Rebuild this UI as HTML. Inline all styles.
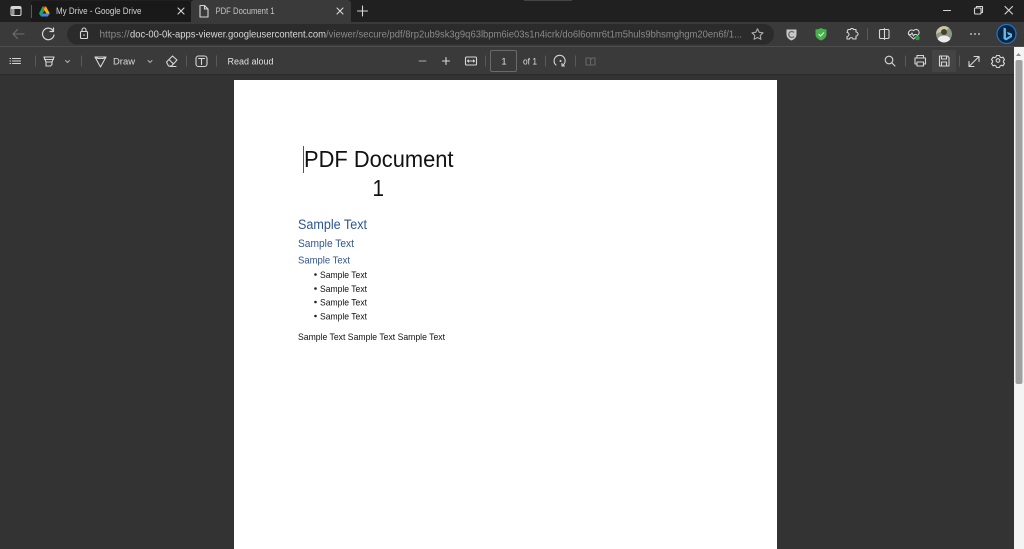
<!DOCTYPE html>
<html><head><meta charset="utf-8"><title>PDF Document 1</title>
<style>
html,body{margin:0;padding:0;width:1024px;height:549px;overflow:hidden;background:#333}
svg{display:block;filter:blur(.35px)}
text{font-family:"Liberation Sans",sans-serif}
.i{fill:none;stroke:#d6d6d6;stroke-width:1.1;stroke-linecap:round;stroke-linejoin:round}
.s{stroke:#5a5a5a;stroke-width:1}
</style></head><body>
<svg width="1024" height="549" viewBox="0 0 1024 549" xmlns="http://www.w3.org/2000/svg">
<rect width="1024" height="549" fill="#333"/>
<!-- tab strip -->
<rect width="1024" height="22" fill="#202020"/>
<rect x="524" y="0" width="48" height="1" fill="#444"/>
<path d="M31 22V5q0-4 4-4H187q4 0 4 4V22z" fill="#191919"/>
<path d="M191 22V4q0-4 4-4H347q4 0 4 4V22z" fill="#3a3a3a"/>
<rect y="22" width="1024" height="25" fill="#3a3a3a"/>
<rect y="46" width="1024" height="1" fill="#4e4e4e"/>
<rect y="47" width="1024" height="27" fill="#3a3a3a"/>
<rect y="74" width="1024" height="1" fill="#2b2b2b"/>
<!-- tab actions -->
<rect class="i" x="11" y="6.500" width="10" height="9" rx="1.500"/>
<rect x="11" y="6.500" width="10" height="2.500" fill="#d6d6d6"/>
<rect x="12" y="9" width="2.500" height="6" fill="#999"/>
<path class="s" d="M31.500 5V18"/>
<!-- drive -->
<path d="M42.500 6.500L39 13.500l2 3 4-7z" fill="#1fa463"/>
<path d="M42.500 6.500h3.500l1 1.800-2.300 3.200z" fill="#db4437"/>
<path d="M46 6.500l3.800 7h-3.500l-2.500-4.500z" fill="#f4b400"/>
<path d="M41 16.500h6.800l2-3h-7z" fill="#4285f4"/>
<text x="56" y="14" font-size="9" fill="#d2d2d2" textLength="85.500" lengthAdjust="spacingAndGlyphs">My Drive - Google Drive</text>
<path class="i" d="M178 8l6 6M184 8l-6 6"/>
<path class="i" d="M200 5.500h4.500l3.500 3.500v8h-8zM204.500 5.500v3.500h3.500" stroke="#e6e6e6"/>
<text x="215.500" y="14" font-size="9" fill="#c4c4c4" textLength="59" lengthAdjust="spacingAndGlyphs">PDF Document 1</text>
<path class="i" d="M337 8l6 6M343 8l-6 6"/>
<path class="i" d="M362.500 6v10M357.500 11h10" stroke="#eee"/>
<!-- window controls -->
<path class="i" d="M943.500 10.500h7"/>
<rect class="i" x="974.500" y="8" width="6.500" height="6" rx="1"/>
<path class="i" d="M976.500 8v-1.500h6v6h-1.500"/>
<path class="i" d="M1005 6.500l7.500 7.500M1012.500 6.500l-7.500 7.500"/>
<!-- nav -->
<path class="i" d="M13 34h11M17.500 29.500L13 34l4.500 4.500" style="stroke:#6e6e6e"/>
<path class="i" d="M53 30.500a5.800 5.800 0 1 0 1 4.500M53.500 28v3.500h-3.500" style="stroke-width:1.200"/>
<!-- url bar -->
<rect x="67" y="24" width="707" height="20.500" rx="10.200" fill="#2b2b2b"/>
<rect class="i" x="80.500" y="31.500" width="7" height="7" rx="1"/>
<path class="i" d="M82 31.500v-1.500a2 2 0 0 1 4 0v1.500"/>
<circle cx="84" cy="35" r=".8" fill="#d6d6d6"/>
<text x="99.500" y="37.500" font-size="10.200" fill="#8a8a8a" textLength="30" lengthAdjust="spacingAndGlyphs">https://</text>
<text x="130" y="37.500" font-size="10.200" fill="#d8d8d8" textLength="196" lengthAdjust="spacingAndGlyphs">doc-00-0k-apps-viewer.googleusercontent.com</text>
<text x="326" y="37.500" font-size="10.200" fill="#8a8a8a" textLength="416" lengthAdjust="spacingAndGlyphs">/viewer/secure/pdf/8rp2ub9sk3g9q63lbpm6ie03s1n4icrk/do6l6omr6t1m5huls9bhsmghgm20en6f/1...</text>
<path class="i" d="M757.500 28.800l1.700 3.500 3.800.5-2.800 2.700.7 3.800-3.400-1.800-3.400 1.800.7-3.800-2.800-2.700 3.800-.5z" style="stroke:#aaa"/>
<!-- extensions -->
<path d="M786.500 29.500h10v5q0 4-5 6-5-2-5-6z" fill="#c9c9c9"/>
<path d="M794 32.500a3 3 0 1 0 0 4" fill="none" stroke="#6a6a6a" stroke-width="1.300"/>
<path d="M815.500 29.500q3 0 5.500-1.500 2.500 1.500 5.500 1.500v5q0 4-5.500 6-5.500-2-5.500-6z" fill="#46b04a"/>
<path d="M818.500 34l2 2 3.500-3.500" fill="none" stroke="#d8f0d8" stroke-width="1.200"/>
<path class="i" d="M848 29.500h2.500a1.600 1.600 0 0 1 3 0h2.500v2.500a2 2 0 0 1 0 4v3h-3a1.800 1.800 0 0 0-3.500 0h-2.500v-2.500a2 2 0 0 0 0-4z"/>
<path class="s" d="M867.500 28V40"/>
<rect class="i" x="879.500" y="29.500" width="9.500" height="9" rx="1.200"/>
<path class="i" d="M884.500 28.500v11"/>
<path class="i" d="M909 31.500a3 3 0 0 1 4.500-.8 3 3 0 0 1 5 3.800l-5 4.500-4.800-4.500a3 3 0 0 1 .3-3zM908.500 34.500h2.500l1-1.500 1.500 3 1-1.500h2"/>
<circle cx="917.500" cy="38" r="2.300" fill="#2d9a3f"/>
<circle cx="944" cy="34" r="8" fill="#8b9a80"/>
<path d="M936 34a8 8 0 0 1 13-6l-4 4-5 0z" fill="#c9c7a6"/>
<circle cx="944" cy="32" r="3" fill="#4c3d33"/>
<path d="M937.500 39a7.800 7.800 0 0 0 13 0q-2-3.500-6.500-3.500t-6.500 3.500z" fill="#ececec"/>
<circle cx="971" cy="34" r=".9" fill="#ddd"/><circle cx="975" cy="34" r=".9" fill="#ddd"/><circle cx="979" cy="34" r=".9" fill="#ddd"/>
<circle cx="1006.500" cy="34" r="9.500" fill="#0d2440" stroke="#1f73c4" stroke-width="1.300"/>
<path d="M1003.500 27.500l2.500 1v9.500l4.500-2.500-2.500-1-1-2.800 5 2v3.300l-6 3.500-2.500-1.500z" fill="#5fb8f0"/>
<!-- pdf toolbar left -->
<path class="i" d="M12.500 58.500h8M12.500 61h8M12.500 63.500h8M10 58.500h.6M10 61h.6M10 63.500h.6"/>
<path class="s" d="M35.500 55.500V66.500M81.500 55.500V66.500M186.500 55.500V66.500M216.500 55.500V66.500"/>
<path class="i" d="M44 57h10l-2 5h-6zM46 62v4h4.500l1.500-1.500V62M44.500 59.500h9"/>
<path class="i" d="M65.500 60.500l2 2 2-2" style="stroke:#aaa"/>
<path class="i" d="M95 57h11l-5.500 10zM95 57l3 1.500h5l3-1.500"/>
<text x="113" y="64.500" font-size="9.600" fill="#dcdcdc" textLength="22" lengthAdjust="spacingAndGlyphs">Draw</text>
<path class="i" d="M148 60.500l2 2 2-2" style="stroke:#aaa"/>
<path class="i" d="M166.500 62l6-6 4.500 4-5.500 6h-3zM169 59.500l4.500 4.500M170 66.500h6"/>
<rect class="i" x="196" y="56" width="11" height="10.500" rx="2.500"/>
<path class="i" d="M198.500 58.500h6M201.500 58.500v6"/>
<text x="227.500" y="64.500" font-size="9.600" fill="#e0e0e0" textLength="46" lengthAdjust="spacingAndGlyphs">Read aloud</text>
<!-- center -->
<path class="i" d="M419 61h7" style="stroke:#aaa"/>
<path class="i" d="M442.500 61h7M446 57.500v7"/>
<rect class="i" x="465.500" y="57" width="11" height="8" rx="1"/>
<path class="i" d="M467.500 61h7M468.500 60l-1 1 1 1M473.500 60l1 1-1 1"/>
<path class="s" d="M485.500 55.500V66.500M545.500 55.500V66.500M575.500 55.500V66.500"/>
<rect x="490.500" y="50.500" width="26" height="21" rx="1.500" fill="none" stroke="#6a6a6a"/>
<text x="501.500" y="64.500" font-size="9" fill="#e0e0e0">1</text>
<text x="523" y="64.500" font-size="9.400" fill="#dcdcdc" textLength="14" lengthAdjust="spacingAndGlyphs">of 1</text>
<path class="i" d="M556 65a5.500 5.500 0 1 1 6.500.5M562 63.500v2.500h2.500"/>
<circle cx="560.500" cy="61" r="1" fill="#d6d6d6"/>
<path class="i" d="M586 58h4.500l1 1 1-1H595v7h-9zM590.500 58.500v6.500" style="stroke:#666"/>
<!-- right -->
<circle class="i" cx="889" cy="60" r="3.800"/>
<path class="i" d="M892 63l3 3"/>
<path class="s" d="M905.500 55.500V66.500M959.500 55.500V66.500"/>
<path class="i" d="M917 58v-2.500h6.500V58M916.500 64h-1.500v-6h10.500v6h-1.500M917 62h6.500v4h-6.500z"/>
<rect x="932" y="50" width="24" height="22" fill="#444"/>
<path class="i" d="M939.500 56h8l1.500 1.500v8.500h-9.500zM941.500 56v3h5v-3M941.500 66v-4h5v4"/>
<path class="i" d="M969.500 66l9-9M974 56.500h5v5M969 61.500v5h5"/>
<circle class="i" cx="998" cy="60.500" r="1.800"/>
<path class="i" d="M996.500 55.500h3l.5 1.500 1.500.7 1.500-.5 1.500 2.500-1.100 1.100v1.400l1.100 1.100-1.500 2.500-1.500-.5-1.500.7-.5 1.500h-3l-.5-1.500-1.500-.7-1.500.5-1.500-2.500 1.100-1.100v-1.400l-1.100-1.100 1.500-2.500 1.500.5 1.500-.7z"/>
<!-- scrollbar -->
<rect x="1014" y="47" width="10" height="502" fill="#f4f4f4"/>
<path d="M1018.500 53l-2.500 3h5z" fill="#8a8a8a"/>
<rect x="1015.500" y="60" width="7" height="324" rx="2" fill="#a0a0a0"/>
<!-- page -->
<rect x="234" y="80" width="543" height="469" fill="#fff"/>
<rect x="303" y="146" width="1" height="27" fill="#555"/>
<text x="304" y="167" font-size="23" fill="#111" textLength="149.500" lengthAdjust="spacingAndGlyphs">PDF Document</text>
<text x="372.500" y="196" font-size="23" fill="#111" textLength="11.500" lengthAdjust="spacingAndGlyphs">1</text>
<text x="298" y="229" font-size="13.500" fill="#2f5496" textLength="69" lengthAdjust="spacingAndGlyphs">Sample Text</text>
<text x="298" y="247" font-size="11" fill="#2f5496" textLength="56" lengthAdjust="spacingAndGlyphs">Sample Text</text>
<text x="298" y="263.500" font-size="10.200" fill="#2f5496" textLength="52" lengthAdjust="spacingAndGlyphs">Sample Text</text>
<g font-size="9.400" fill="#111">
<circle cx="315.500" cy="274.500" r="1.300" fill="#222"/><text x="320" y="278" textLength="47" lengthAdjust="spacingAndGlyphs">Sample Text</text>
<circle cx="315.500" cy="288.500" r="1.300" fill="#222"/><text x="320" y="292" textLength="47" lengthAdjust="spacingAndGlyphs">Sample Text</text>
<circle cx="315.500" cy="302" r="1.300" fill="#222"/><text x="320" y="305.500" textLength="47" lengthAdjust="spacingAndGlyphs">Sample Text</text>
<circle cx="315.500" cy="316" r="1.300" fill="#222"/><text x="320" y="319.500" textLength="47" lengthAdjust="spacingAndGlyphs">Sample Text</text>
<text x="298" y="340" textLength="147" lengthAdjust="spacingAndGlyphs">Sample Text Sample Text Sample Text</text>
</g>
</svg>
</body></html>
